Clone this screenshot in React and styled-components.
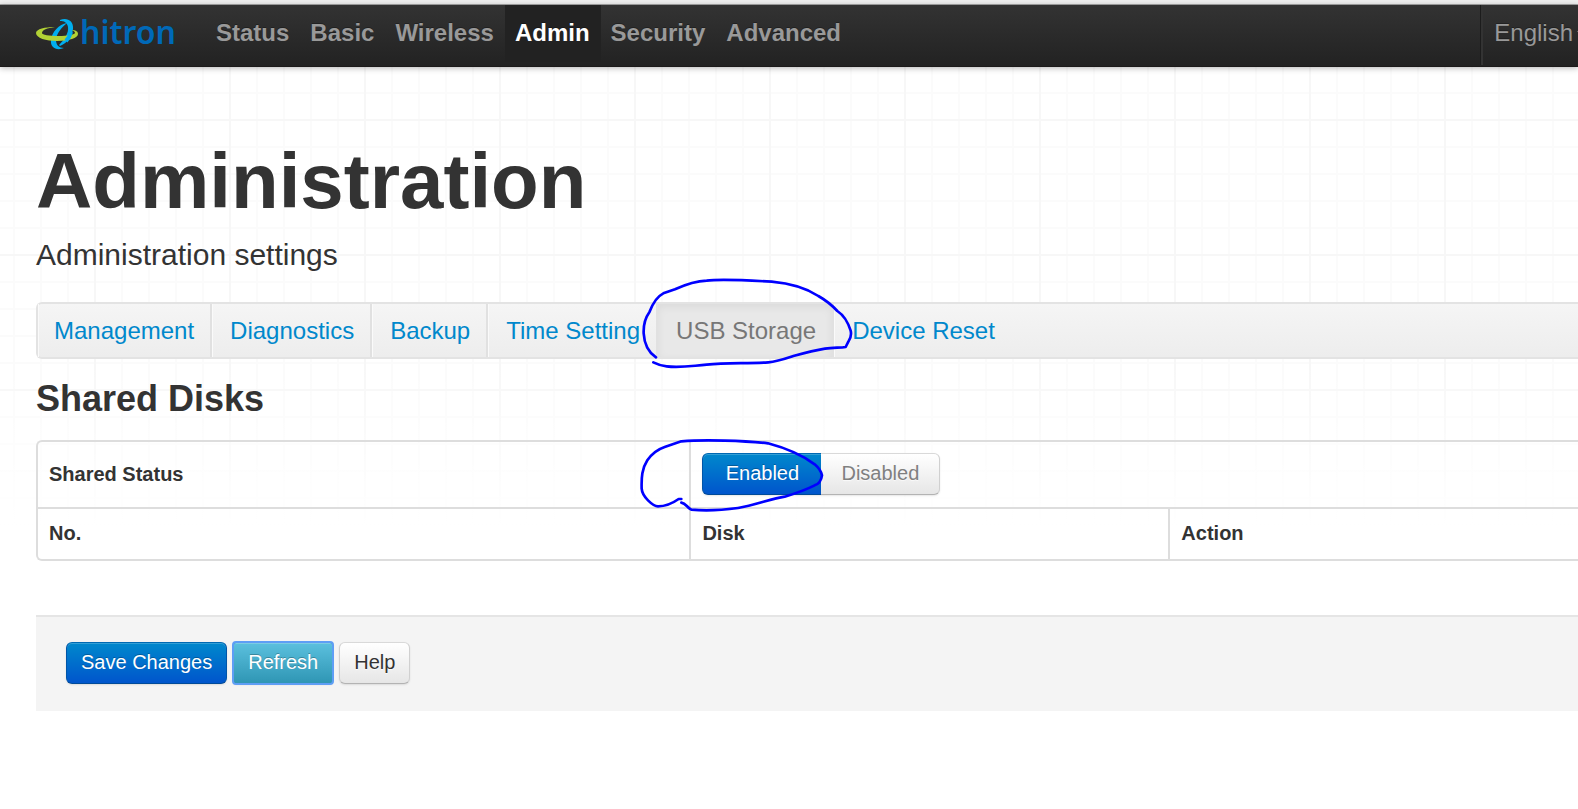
import React from "react";
import styled, { createGlobalStyle, css } from "styled-components";

const GlobalStyle = createGlobalStyle`
  * {
    box-sizing: border-box;
    margin: 0;
    padding: 0;
  }

  body {
    background-color: #fff;
    color: #333;
    font-family: "Liberation Sans", Arial, sans-serif;
    font-size: 20px;
    overflow-x: hidden;
  }
`;

const Page = styled.div`
  padding-bottom: 64px;
  background-image: linear-gradient(rgba(255, 255, 255, 0) 360px, #fff 528px),
    linear-gradient(#f7f7f7 2px, transparent 2px),
    linear-gradient(90deg, #f7f7f7 2px, transparent 2px),
    linear-gradient(#fbfbfb 2px, transparent 2px),
    linear-gradient(90deg, #fbfbfb 2px, transparent 2px);
  background-size: 100% 100%, 135px 135px, 135px 135px, 27px 27px, 27px 27px;
  background-position: 0 0, 0 119px, 94px 0, 0 11px, 13px 0;
`;

const TopStrip = styled.div`
  height: 5px;
  background-color: #f0f0f0;
  border-bottom: 1px solid #a8a8a8;
`;

const HeaderStyle = styled.header`
  display: flex;
  height: 62px;
  padding-left: 36px;
  overflow: hidden;
  background-image: linear-gradient(#333, #222);
  border-bottom: 1px solid #1c1a1a;
  box-shadow: 0 1px 6px rgba(0, 0, 0, 0.3);
`;

const Brand = styled.a`
  display: block;
  height: 30px;
  margin: 14px 28px 0 0;
`;

const LogoSvg = styled.svg`
  display: block;
  overflow: visible;
`;

const Nav = styled.nav`
  display: flex;
  flex: 1;
`;

const NavItem = styled.a`
  height: 57px;
  padding: 0 11px 0 10px;
  color: ${(props) => (props.$active ? "#fff" : "#999")};
  background-color: ${(props) => (props.$active ? "#222" : "transparent")};
  font-size: 24px;
  font-weight: bold;
  line-height: 56px;
  text-decoration: none;
  text-shadow: 0 -1px 0 rgba(0, 0, 0, 0.3);

  &:hover {
    color: #fff;
  }
`;

const Language = styled.button`
  display: flex;
  align-items: center;
  gap: 4px;
  height: 60px;
  margin-right: -23px;
  padding: 0 14px 4px 13px;
  color: #999;
  background: none;
  border: 0;
  border-left: 1px solid #1c1c1c;
  box-shadow: inset 2px 0 0 #333;
  font-family: inherit;
  font-size: 24px;
  text-shadow: 0 -1px 0 rgba(0, 0, 0, 0.3);
`;

const Caret = styled.span`
  border: 5px solid transparent;
  border-top-color: #999;
  border-bottom: 0;
`;

const Content = styled.main`
  padding: 75px 0 0 36px;
`;

const Title = styled.h1`
  font-size: 78px;
  line-height: 78px;
`;

const Lead = styled.p`
  margin-top: 15px;
  font-size: 30px;
  line-height: 40px;
`;

const Tabs = styled.nav`
  display: flex;
  margin-top: 27px;
  background-image: linear-gradient(#f5f5f5, #ededed);
  border: 2px solid #e3e3e3;
  border-right: 0;
  border-radius: 6px 0 0 6px;
`;

const Tab = styled.a`
  display: block;
  padding: 0 16px 0 18px;
  color: #08c;
  font-size: 24px;
  line-height: 53px;
  text-decoration: none;

  ${(props) =>
    props.$active &&
    css`
      color: #777;
      background-color: #e8e8e8;
      box-shadow: inset 0 3px 8px rgba(0, 0, 0, 0.06);
    `}
`;

const TabItem = styled.div`
  position: relative;
  border-right: 2px solid #e1e1e1;
  box-shadow: inset 1px 0 0 #fafafa;

  &:first-child ${Tab} {
    padding-left: 16px;
  }

  &:last-child {
    border-right: 0;
  }
`;

const SectionTitle = styled.h2`
  margin-top: 13px;
  font-size: 36px;
  line-height: 54px;
`;

const Table = styled.table`
  width: 100%;
  margin-top: 14px;
  table-layout: fixed;
  border: 2px solid #ddd;
  border-right: 0;
  border-radius: 6px 0 0 6px;
  border-spacing: 0;
`;

const Column = styled.col`
  width: ${(props) => props.$width || "auto"};
`;

const HeadCell = styled.th`
  padding: 11px 11px 12px;
  line-height: 27px;
  text-align: left;

  & + & {
    border-left: 2px solid #ddd;
  }

  tr + tr > & {
    border-top: 2px solid #ddd;
  }
`;

const StatusCell = styled.td`
  position: relative;
  padding: 11px 11px 12px;
  border-left: 2px solid #ddd;
`;

const looks = {
  default: css`
    color: #333;
    background-image: linear-gradient(#fff, #e6e6e6);
    border-color: #d9d9d9 #d0d0d0 #b3b3b3;
    text-shadow: 0 1px 1px rgba(255, 255, 255, 0.75);
  `,
  primary: css`
    color: #fff;
    background-image: linear-gradient(#08c, #05c);
    border-color: #0069b3 #0055a8 #004a99;
  `,
  info: css`
    color: #fff;
    background-image: linear-gradient(#5bc0de, #2f96b4);
    border-color: #3fa0bd #2f8ca8 #24748c;
    border-radius: 3px;
    outline: 2px solid #5e9ef5;
    outline-offset: -1px;
  `,
};

const Button = styled.button`
  height: 42px;
  padding: 0 14px 2px;
  border: 1px solid;
  border-radius: 6px;
  box-shadow: inset 0 1px 0 rgba(255, 255, 255, 0.2),
    0 1px 2px rgba(0, 0, 0, 0.1);
  font-family: inherit;
  font-size: 20px;
  text-shadow: 0 -1px 0 rgba(0, 0, 0, 0.25);
  ${(props) => looks[props.$look || "default"]}
`;

const ButtonGroup = styled.div`
  display: flex;

  ${Button} {
    padding: 0 20px 2px;
    min-width: 119px;
  }

  ${Button}:first-child {
    border-right: 0;
    border-radius: 6px 0 0 6px;
  }

  ${Button}:last-child {
    color: #808080;
    border-left: 0;
    border-radius: 0 6px 6px 0;
  }
`;

const Actions = styled.div`
  display: flex;
  gap: 6px;
  margin-top: 54px;
  padding: 25px 30px 27px;
  background-color: #f4f4f4;
  border-top: 2px solid #e5e5e5;
`;

/* pen marks, drawn over the tab and over the switch */
const Pen = styled.svg`
  position: absolute;
  z-index: 1;
  fill: none;
  stroke: #00f;
  stroke-width: 8;
  stroke-linecap: round;
  stroke-linejoin: round;
  pointer-events: none;
`;

const TabPen = styled(Pen)`
  top: -29px;
  left: -18px;
`;

const SwitchPen = styled(Pen)`
  top: -5px;
  left: -53px;
`;

export default class App extends React.Component {
  render() {
    return (
      <Page>
        <GlobalStyle />
        <TopStrip />
        <Header />
        <Main />
      </Page>
    );
  }
}

const Logo = () => {
  return (
    <LogoSvg width="142" height="30" viewBox="0 0 142 30" role="img" aria-label="hitron">
      <path
        fill="#00aeef"
        d="M24 1C30-2 38 1 37 10C36 18 31 24 24 27L23 26C28 21 33 14 32 8C31 3 28 2 24 2Z"
      />
      <path
        fill="#00aeef"
        d="M31 4C26 8 20 15 20 21C20 26 23 29 28 29C21 32 14 29 15 21C16 13 23 5 31 4Z"
      />
      <path
        fill="#b2d235"
        d="M19 8C9 8 0 10 0 14C0 19 10 22 21 22C33 22 42 19 42 15C42 12 39 11 36 11C38 12 39 13 39 14C38 16 31 17 23 17C13 17 6 16 6 14C6 11 11 9 19 8Z"
      />
      <path fill="none" stroke="#00aeef" strokeWidth="4" d="M35 13C34 17 32 20 30 22" />
      <text
        x="44"
        y="25"
        fill="#0069b8"
        fontFamily="'Noto Sans', 'Open Sans', sans-serif"
        fontSize="32"
        fontWeight="600"
      >
        hitron
      </text>
    </LogoSvg>
  );
};

const Header = () => {
  return (
    <HeaderStyle>
      <Brand href="#">
        <Logo />
      </Brand>
      <Nav>
        <NavItem href="#">Status</NavItem>
        <NavItem href="#">Basic</NavItem>
        <NavItem href="#">Wireless</NavItem>
        <NavItem href="#" $active>
          Admin
        </NavItem>
        <NavItem href="#">Security</NavItem>
        <NavItem href="#">Advanced</NavItem>
      </Nav>
      <Language type="button">
        English
        <Caret />
      </Language>
    </HeaderStyle>
  );
};

const Main = () => {
  return (
    <Content>
      <Title>Administration</Title>
      <Lead>Administration settings</Lead>
      <SectionTabs />
      <SectionTitle>Shared Disks</SectionTitle>
      <SharedDisks />
      <Actions>
        <Button type="button" $look="primary">
          Save Changes
        </Button>
        <Button type="button" $look="info">
          Refresh
        </Button>
        <Button type="button">Help</Button>
      </Actions>
    </Content>
  );
};

const SectionTabs = () => {
  return (
    <Tabs>
      <TabItem>
        <Tab href="#">Management</Tab>
      </TabItem>
      <TabItem>
        <Tab href="#">Diagnostics</Tab>
      </TabItem>
      <TabItem>
        <Tab href="#">Backup</Tab>
      </TabItem>
      <TabItem>
        <Tab href="#">Time Setting</Tab>
      </TabItem>
      <TabItem>
        <Tab href="#" $active>
          USB Storage
        </Tab>
        <TabPen width="217" height="95" viewBox="120 45 651 285" aria-hidden="true">
          <path d="M168 292C150 280 133 255 131 220C130 195 135 175 148 157C158 130 170 110 190 100L225 88C260 72 290 63 320 62C350 58 410 59 515 65C570 70 620 85 655 108C685 125 700 140 712 153C735 168 745 190 752 212C755 225 750 238 745 245L737 261C720 264 700 262 675 266C640 272 610 280 580 288C550 298 530 305 505 307C440 311 380 308 320 314C270 318 240 324 200 319C180 317 170 312 160 307" />
        </TabPen>
      </TabItem>
      <TabItem>
        <Tab href="#">Device Reset</Tab>
      </TabItem>
    </Tabs>
  );
};

const SharedDisks = () => {
  return (
    <Table>
      <colgroup>
        <Column $width="42.3%" />
        <Column $width="31.1%" />
        <Column />
      </colgroup>
      <tbody>
        <tr>
          <HeadCell scope="row">Shared Status</HeadCell>
          <StatusCell colSpan="2">
            <ButtonGroup role="group" aria-label="Shared Status">
              <Button type="button" $look="primary" aria-pressed="true">
                Enabled
              </Button>
              <Button type="button" aria-pressed="false">
                Disabled
              </Button>
            </ButtonGroup>
            <SwitchPen width="188" height="77" viewBox="120 530 564 231" aria-hidden="true">
              <path d="M250 716L242 716C225 728 205 738 180 738C170 738 160 730 150 720C140 710 132 700 131 685C130 650 132 625 148 600C165 575 185 565 200 560L250 543C320 537 440 541 510 549C570 565 620 590 650 612C665 625 670 635 672 645C670 660 665 670 650 675C620 690 590 700 560 709C520 715 470 735 420 743C370 750 330 753 280 748C265 740 265 730 250 727" />
            </SwitchPen>
          </StatusCell>
        </tr>
        <tr>
          <HeadCell scope="col">No.</HeadCell>
          <HeadCell scope="col">Disk</HeadCell>
          <HeadCell scope="col">Action</HeadCell>
        </tr>
      </tbody>
    </Table>
  );
};
